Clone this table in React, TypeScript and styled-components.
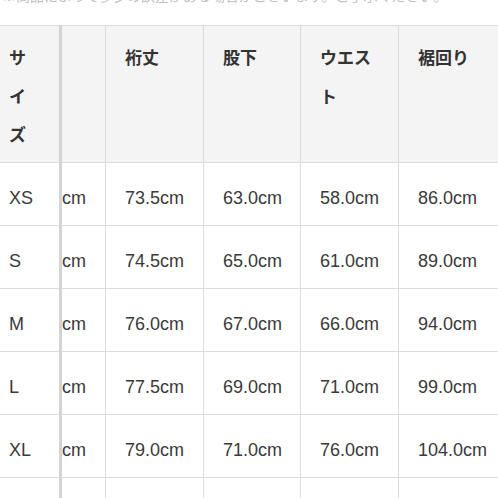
import React from "react";
import styled, { createGlobalStyle } from "styled-components";

const Global = createGlobalStyle`
  html, body { margin: 0; padding: 0; background: #ffffff; }
  body { font-family: "Liberation Sans", "Noto Sans CJK JP", sans-serif; }
`;

const Page = styled.div`
  width: 498px;
  height: 498px;
  overflow: hidden;
  background: #fff;
`;

const Note = styled.p`
  margin: -14px 0 0 2px;
  height: 39px;
  font-size: 14px;
  line-height: 18px;
  color: #c0c0c0;
  white-space: nowrap;
  font-family: "Noto Sans CJK JP", sans-serif;
`;

const Table = styled.table`
  border-collapse: collapse;
  table-layout: fixed;
  width: 600px;
  margin-left: -1px;
`;

const HeadCell = styled.th<{ $pad?: number; $sticky?: boolean }>`
  height: 137px;
  box-sizing: border-box;
  padding: 12px 20px 0 ${(p) => p.$pad ?? 19}px;
  vertical-align: top;
  text-align: left;
  background: #f4f4f4;
  border: 1px solid #dcdcdc;
  ${(p) => (p.$sticky ? "border-right: 3px solid #d4d4d4;" : "")}
  font-family: "Noto Sans CJK JP", sans-serif;
  font-weight: 700;
  font-size: 17px;
  line-height: 38.5px;
  color: #333;
  word-break: break-all;
`;

const Cell = styled.td<{ $pad?: number; $sticky?: boolean }>`
  height: 63px;
  box-sizing: border-box;
  padding: 8px 0 0 ${(p) => p.$pad ?? 19}px;
  vertical-align: middle;
  text-align: left;
  background: #fff;
  border: 1px solid #dcdcdc;
  ${(p) => (p.$sticky ? "border-right: 3px solid #d4d4d4;" : "")}
  font-family: "Liberation Sans", sans-serif;
  font-size: 18px;
  color: #3a3a3a;
  white-space: nowrap;
  overflow: hidden;
`;

const rows = [
  ["XS", "73.5cm", "63.0cm", "58.0cm", "86.0cm"],
  ["S", "74.5cm", "65.0cm", "61.0cm", "89.0cm"],
  ["M", "76.0cm", "67.0cm", "66.0cm", "94.0cm"],
  ["L", "77.5cm", "69.0cm", "71.0cm", "99.0cm"],
  ["XL", "79.0cm", "71.0cm", "76.0cm", "104.0cm"],
  ["", "", "", "", ""],
];

export default function App() {
  return (
    <Page>
      <Global />
      <Note>※商品によって多少の誤差がある場合がございます。ご了承ください。</Note>
      <Table>
        <colgroup>
          <col style={{ width: 61 }} />
          <col style={{ width: 45 }} />
          <col style={{ width: 98 }} />
          <col style={{ width: 97 }} />
          <col style={{ width: 98 }} />
          <col style={{ width: 200 }} />
        </colgroup>
        <thead>
          <tr>
            <HeadCell $pad={9} $sticky>サイズ</HeadCell>
            <HeadCell $pad={2}></HeadCell>
            <HeadCell>裄丈</HeadCell>
            <HeadCell>股下</HeadCell>
            <HeadCell>ウエスト</HeadCell>
            <HeadCell>裾回り</HeadCell>
          </tr>
        </thead>
        <tbody>
          {rows.map((r, i) => (
            <tr key={i}>
              <Cell $pad={9} $sticky>{r[0]}</Cell>
              <Cell $pad={0}>{r[0] ? "cm" : ""}</Cell>
              <Cell>{r[1]}</Cell>
              <Cell>{r[2]}</Cell>
              <Cell>{r[3]}</Cell>
              <Cell>{r[4]}</Cell>
            </tr>
          ))}
        </tbody>
      </Table>
    </Page>
  );
}
